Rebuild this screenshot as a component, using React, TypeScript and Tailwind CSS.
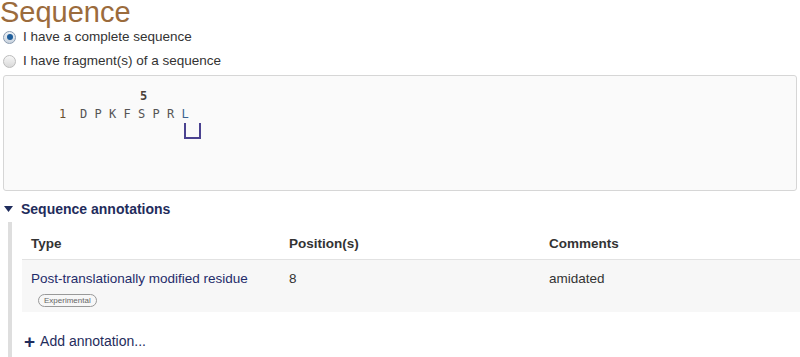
import { useState } from "react";

const RESIDUES = ["D", "P", "K", "F", "S", "P", "R", "L"];

function Radio({ checked, label, onSelect }: { checked: boolean; label: string; onSelect: () => void }) {
  return (
    <label className="flex h-6 cursor-pointer items-center gap-[7px] pl-[3px]" onClick={onSelect}>
      <span
        className={`flex h-[13px] w-[13px] items-center justify-center rounded-full border ${
          checked ? "border-[#8a9bb0] bg-gradient-to-b from-[#eef2f6] to-[#c9d3de]" : "border-[#bcbcbc] bg-gradient-to-b from-[#f7f7f7] to-[#d9d9d9]"
        }`}
      >
        {checked && <span className="h-[6px] w-[6px] rounded-full bg-[#1d5d9b]" />}
      </span>
      <span className="text-[13.5px] text-[#333]">{label}</span>
    </label>
  );
}

export default function App() {
  const [mode, setMode] = useState<"complete" | "fragment">("complete");

  return (
    <div className="h-[357px] w-[800px] overflow-hidden bg-white font-['Liberation_Sans',Arial,sans-serif]">
      <h1 className="-mt-[1px] text-[29px] leading-[26px] text-[#9b6b3c]">Sequence</h1>

      <div>
        <Radio checked={mode === "complete"} label="I have a complete sequence" onSelect={() => setMode("complete")} />
        <Radio checked={mode === "fragment"} label="I have fragment(s) of a sequence" onSelect={() => setMode("fragment")} />
      </div>

      <div className="mx-[3px] mt-[2px] h-[116px] rounded-[3px] border border-[#d6d6d6] bg-[#fafafa] pl-[55px] pt-[11px] font-['DejaVu_Sans_Mono',monospace] text-[12px]">
        <div className="flex h-[18px] items-center">
          <span className="w-[81px]" />
          <span className="font-bold text-[#4a4038]">5</span>
        </div>
        <div className="flex h-[18px] items-center">
          <span className="w-[21px] text-[#6b4f2f]">1</span>
          {RESIDUES.map((r, i) => (
            <span key={i} className={`w-[14.5px] ${i === RESIDUES.length - 1 ? "text-[#3d6290]" : "text-[#555]"}`}>
              {r}
            </span>
          ))}
        </div>
        <div className="flex">
          <span className="w-[125px]" />
          <span className="h-[16px] w-[17px] border-x-2 border-b-2 border-[#4a4290]" />
        </div>
      </div>

      <div className="mt-[10px] flex h-[16px] items-center gap-[8px] pl-[4px]">
        <svg width="9" height="6" viewBox="0 0 9 6">
          <path d="M0 0 L9 0 L4.5 6 Z" fill="#1f2c5c" />
        </svg>
        <span className="text-[14px] font-bold text-[#1f2c5c]">Sequence annotations</span>
      </div>

      <div className="ml-[8px] mt-[5px] flex border-l-4 border-[#dedede]">
        <div className="flex-1 pl-[10px]">
          <table className="w-full border-collapse text-[13.5px]">
            <thead>
              <tr className="h-[37px] border-b border-[#e2e2e2] text-left text-[#333]">
                <th className="w-[267px] pl-[9px] pt-[8px] font-bold">Type</th>
                <th className="w-[260px] pt-[8px] font-bold">Position(s)</th>
                <th className="pt-[8px] font-bold">Comments</th>
              </tr>
            </thead>
            <tbody>
              <tr className="h-[53px] bg-[#f7f7f7] align-top text-[#333]">
                <td className="pl-[9px] pt-[9px]">
                  <div className="text-[#1f2c6a]">Post-translationally modified residue</div>
                  <span className="ml-[7px] mt-[2px] inline-block rounded-full border border-[#999] px-[5px] text-[8px] leading-[11px] text-[#666]">
                    Experimental
                  </span>
                </td>
                <td className="pt-[9px]">8</td>
                <td className="pt-[9px]">amidated</td>
              </tr>
            </tbody>
          </table>
          <div className="mt-[20px] flex h-[18px] items-center gap-[5px] pl-[2px] text-[14px] text-[#1f2c5c]">
            <span className="text-[19px] font-bold leading-none">+</span>
            <span>Add annotation...</span>
          </div>
          <div className="h-[20px]" />
        </div>
      </div>
    </div>
  );
}
